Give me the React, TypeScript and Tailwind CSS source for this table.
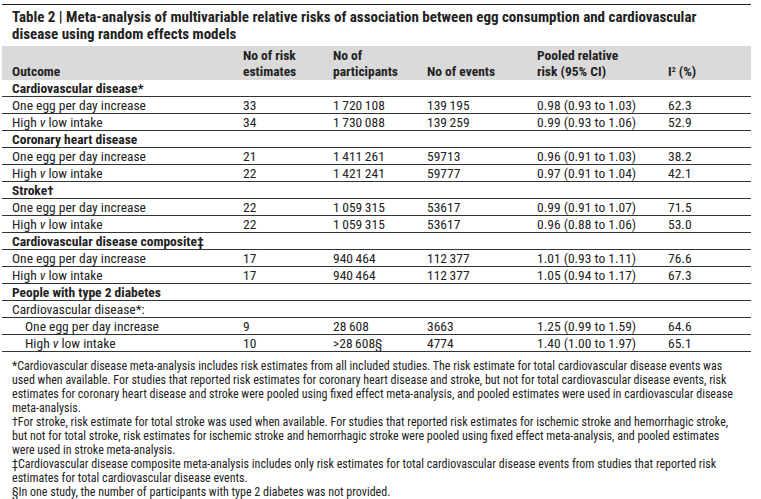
type Row = {
  label: React.ReactNode
  group?: boolean
  indent?: boolean
  cells?: string[]
}

const hv = (
  <>
    High <i>v</i> low intake
  </>
)

const rows: Row[] = [
  { label: 'Cardiovascular disease*', group: true },
  { label: 'One egg per day increase', cells: ['33', '1\u2009720\u2009108', '139\u2009195', '0.98 (0.93 to 1.03)', '62.3'] },
  { label: hv, cells: ['34', '1\u2009730\u2009088', '139\u2009259', '0.99 (0.93 to 1.06)', '52.9'] },
  { label: 'Coronary heart disease', group: true },
  { label: 'One egg per day increase', cells: ['21', '1\u2009411\u2009261', '59713', '0.96 (0.91 to 1.03)', '38.2'] },
  { label: hv, cells: ['22', '1\u2009421\u2009241', '59777', '0.97 (0.91 to 1.04)', '42.1'] },
  { label: 'Stroke\u2020', group: true },
  { label: 'One egg per day increase', cells: ['22', '1\u2009059\u2009315', '53617', '0.99 (0.91 to 1.07)', '71.5'] },
  { label: hv, cells: ['22', '1\u2009059\u2009315', '53617', '0.96 (0.88 to 1.06)', '53.0'] },
  { label: 'Cardiovascular disease composite\u2021', group: true },
  { label: 'One egg per day increase', cells: ['17', '940\u2009464', '112\u2009377', '1.01 (0.93 to 1.11)', '76.6'] },
  { label: hv, cells: ['17', '940\u2009464', '112\u2009377', '1.05 (0.94 to 1.17)', '67.3'] },
  { label: 'People with type 2 diabetes', group: true },
  { label: 'Cardiovascular disease*:' },
  { label: 'One egg per day increase', indent: true, cells: ['9', '28\u2009608', '3663', '1.25 (0.99 to 1.59)', '64.6'] },
  { label: hv, indent: true, cells: ['10', '>28\u2009608\u00a7', '4774', '1.40 (1.00 to 1.97)', '65.1'] },
]

// footnote lines broken where the printed table breaks them
const notes: string[][] = [
  [
    '*Cardiovascular disease meta-analysis includes risk estimates from all included studies. The risk estimate for total cardiovascular disease events was',
    'used when available. For studies that reported risk estimates for coronary heart disease and stroke, but not for total cardiovascular disease events, risk',
    'estimates for coronary heart disease and stroke were pooled using fixed effect meta-analysis, and pooled estimates were used in cardiovascular disease',
    'meta-analysis.',
  ],
  [
    '\u2020For stroke, risk estimate for total stroke was used when available. For studies that reported risk estimates for ischemic stroke and hemorrhagic stroke,',
    'but not for total stroke, risk estimates for ischemic stroke and hemorrhagic stroke were pooled using fixed effect meta-analysis, and pooled estimates',
    'were used in stroke meta-analysis.',
  ],
  [
    '\u2021Cardiovascular disease composite meta-analysis includes only risk estimates for total cardiovascular disease events from studies that reported risk',
    'estimates for total cardiovascular disease events.',
  ],
  ['\u00a7In one study, the number of participants with type 2 diabetes was not provided.'],
]

const grid = 'grid grid-cols-[241px_90px_94px_110px_131px_1fr]'

export default function App() {
  return (
    <div className="h-[499px] w-[761px] overflow-hidden bg-white pt-[4px] font-['Roboto',sans-serif] text-[#222] [font-stretch:75%]">
      <div className="ml-[2px] w-[749px] border-t border-[#222]">
        <h1 className="px-[10px] pt-[4px] pb-[3px] text-[15px] leading-[17px] font-bold">
          Table 2 | Meta-analysis of multivariable relative risks of association between egg consumption and cardiovascular disease using random effects models
        </h1>

        <div className={`${grid} h-[34px] items-end bg-[#dadada] pb-[1px] text-[13.5px] leading-[16px] font-bold`}>
          <div className="pl-[10px]">Outcome</div>
          <div>No of risk<br />estimates</div>
          <div>No of<br />participants</div>
          <div>No of events</div>
          <div>Pooled relative<br />risk (95% CI)</div>
          <div>I<sup className="text-[8px]">2</sup> (%)</div>
        </div>

        <div className="text-[13.5px] leading-[16px]">
          {rows.map((r, i) => (
            <div key={i} className={`${grid} h-[17px] items-center border-b border-[#333]`}>
              <div className={`${r.indent ? 'pl-[23px]' : 'pl-[10px]'} ${r.group ? 'font-bold' : ''} whitespace-nowrap`}>{r.label}</div>
              {r.cells?.map((c, j) => (
                <div key={j} className="whitespace-nowrap">{c}</div>
              ))}
            </div>
          ))}
        </div>

        <div className="pl-[10px] pt-[7px] text-[12px] leading-[14px]">
          {notes.map((lines, i) => (
            <p key={i}>
              {lines.map((l, j) => (
                <span key={j} className="block whitespace-nowrap">{l}</span>
              ))}
            </p>
          ))}
        </div>
      </div>
    </div>
  )
}
